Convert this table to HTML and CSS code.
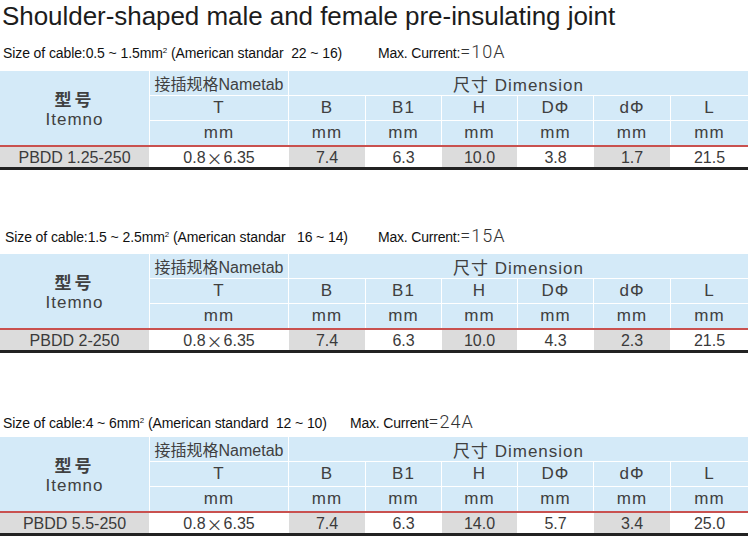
FILE: index.html
```html
<!DOCTYPE html>
<html>
<head>
<meta charset="utf-8">
<link rel="stylesheet" href="styles.css">
</head>
<body>
<h1 class="title">Shoulder-shaped male and female pre-insulating joint</h1>

<section class="spec spec-1">
  <div class="cap">
    <span class="size size-wide">Size of cable:0.5 ~ 1.5mm<sup>2</sup> (American standar&nbsp; 22 ~ 16)</span>
    <span class="cur">Max. Current:<span class="amp">=10A</span></span>
  </div>
  <div class="tbl">
    <div class="head">
      <div class="c item"><b>型号</b><span>Itemno</span></div>
      <div class="c nametab">接插规格Nametab</div>
      <div class="c dim">尺寸 Dimension</div>
      <div class="c">T</div><div class="c">B</div><div class="c">B1</div><div class="c">H</div><div class="c">DΦ</div><div class="c">dΦ</div><div class="c">L</div>
      <div class="c">mm</div><div class="c">mm</div><div class="c">mm</div><div class="c">mm</div><div class="c">mm</div><div class="c">mm</div><div class="c">mm</div>
    </div>
    <div class="row">
      <div class="d g">PBDD 1.25-250</div><div class="d">0.8<span class="x">×</span>6.35</div><div class="d g">7.4</div><div class="d">6.3</div><div class="d g">10.0</div><div class="d">3.8</div><div class="d g">1.7</div><div class="d">21.5</div>
    </div>
  </div>
</section>

<section class="spec spec-2">
  <div class="cap">
    <span class="size size-wide size-in">Size of cable:1.5 ~ 2.5mm<sup>2</sup> (American standar&nbsp;&nbsp; 16 ~ 14)</span>
    <span class="cur">Max. Current:<span class="amp">=15A</span></span>
  </div>
  <div class="tbl">
    <div class="head">
      <div class="c item"><b>型号</b><span>Itemno</span></div>
      <div class="c nametab">接插规格Nametab</div>
      <div class="c dim">尺寸 Dimension</div>
      <div class="c">T</div><div class="c">B</div><div class="c">B1</div><div class="c">H</div><div class="c">DΦ</div><div class="c">dΦ</div><div class="c">L</div>
      <div class="c">mm</div><div class="c">mm</div><div class="c">mm</div><div class="c">mm</div><div class="c">mm</div><div class="c">mm</div><div class="c">mm</div>
    </div>
    <div class="row">
      <div class="d g">PBDD 2-250</div><div class="d">0.8<span class="x">×</span>6.35</div><div class="d g">7.4</div><div class="d">6.3</div><div class="d g">10.0</div><div class="d">4.3</div><div class="d g">2.3</div><div class="d">21.5</div>
    </div>
  </div>
</section>

<section class="spec spec-3">
  <div class="cap">
    <span class="size size-narrow">Size of cable:4 ~ 6mm<sup>2</sup> (American standard&nbsp; 12 ~ 10)</span>
    <span class="cur">Max. Current<span class="amp">=24A</span></span>
  </div>
  <div class="tbl">
    <div class="head">
      <div class="c item"><b>型号</b><span>Itemno</span></div>
      <div class="c nametab">接插规格Nametab</div>
      <div class="c dim">尺寸 Dimension</div>
      <div class="c">T</div><div class="c">B</div><div class="c">B1</div><div class="c">H</div><div class="c">DΦ</div><div class="c">dΦ</div><div class="c">L</div>
      <div class="c">mm</div><div class="c">mm</div><div class="c">mm</div><div class="c">mm</div><div class="c">mm</div><div class="c">mm</div><div class="c">mm</div>
    </div>
    <div class="row">
      <div class="d g">PBDD 5.5-250</div><div class="d">0.8<span class="x">×</span>6.35</div><div class="d g">7.4</div><div class="d">6.3</div><div class="d g">14.0</div><div class="d">5.7</div><div class="d g">3.4</div><div class="d">25.0</div>
    </div>
  </div>
</section>
</body>
</html>
```

FILE: styles.css
```css
html, body {
  margin: 0;
  padding: 0;
  background: #ffffff;
}
body {
  width: 750px;
  height: 540px;
  overflow: hidden;
  font-family: "Liberation Sans", Arial, "Noto Sans CJK SC", sans-serif;
  color: #333;
}
.title {
  margin: 0;
  box-sizing: border-box;
  height: 40px;
  padding: 1px 0 0 2px;
  font-size: 26px;
  line-height: 30px;
  font-weight: normal;
  color: #1c1c1c;
  white-space: nowrap;
  letter-spacing: -0.05px;
}
.spec-1 { margin-top: 2px; }
.spec-2 { margin-top: 56px; }
.spec-3 { margin-top: 59px; }
.cap {
  display: flex;
  align-items: baseline;
  height: 20px;
  line-height: 20px;
  font-size: 14px;
  color: #111;
  white-space: nowrap;
}
.spec-1 .cap + .tbl { margin-top: 9px; }
.spec-2 .cap + .tbl { margin-top: 8px; }
.spec-3 .cap + .tbl { margin-top: 5px; }
.size {
  box-sizing: border-box;
  padding-left: 3px;
  letter-spacing: -0.1px;
}
.size-in { padding-left: 5px; }
.size-wide { width: 378px; }
.size-narrow { width: 350px; }
.size sup {
  font-size: 8px;
  line-height: 0;
  vertical-align: 5px;
}
.cur {
  letter-spacing: -0.2px;
}
.amp {
  font-size: 18px;
  color: #333;
  letter-spacing: 1px;
  font-family: Roboto, "Liberation Sans", sans-serif;
  font-weight: 300;
}
.tbl {
  width: 748px;
}
.head, .row {
  display: grid;
  grid-template-columns: 149px 138px 76px 75px 75px 75px 76px 77px;
  column-gap: 1px;
  background: #ffffff;
}
.head {
  grid-template-rows: 24px 24px 24px;
  row-gap: 1px;
}
.c {
  background: #d4eaf8;
  display: flex;
  align-items: center;
  justify-content: center;
  font-size: 17px;
  letter-spacing: 1px;
  color: #404040;
  white-space: nowrap;
}
.item {
  grid-row: 1 / 4;
  flex-direction: column;
  line-height: 21px;
  padding-top: 2px;
  box-sizing: border-box;
}
.item b {
  font-weight: bold;
  letter-spacing: 3px;
  font-family: "Noto Sans CJK SC", sans-serif;
  font-size: 17px;
  color: #404040;
}
.nametab {
  font-size: 16px;
  letter-spacing: 0;
}
.dim {
  grid-column: 3 / 9;
}
.row {
  grid-template-rows: 20px;
  border-top: 2px solid #c9514f;
  border-bottom: 3px solid #222;
}
.d {
  background: #ffffff;
  display: flex;
  align-items: center;
  justify-content: center;
  font-size: 16px;
  color: #3a3a3a;
  white-space: nowrap;
  padding-top: 1px;
}
.d.g {
  background: #dcdcdc;
}
.x {
  font-family: "Noto Sans CJK SC", sans-serif;
  margin: 0 1px;
}
```
